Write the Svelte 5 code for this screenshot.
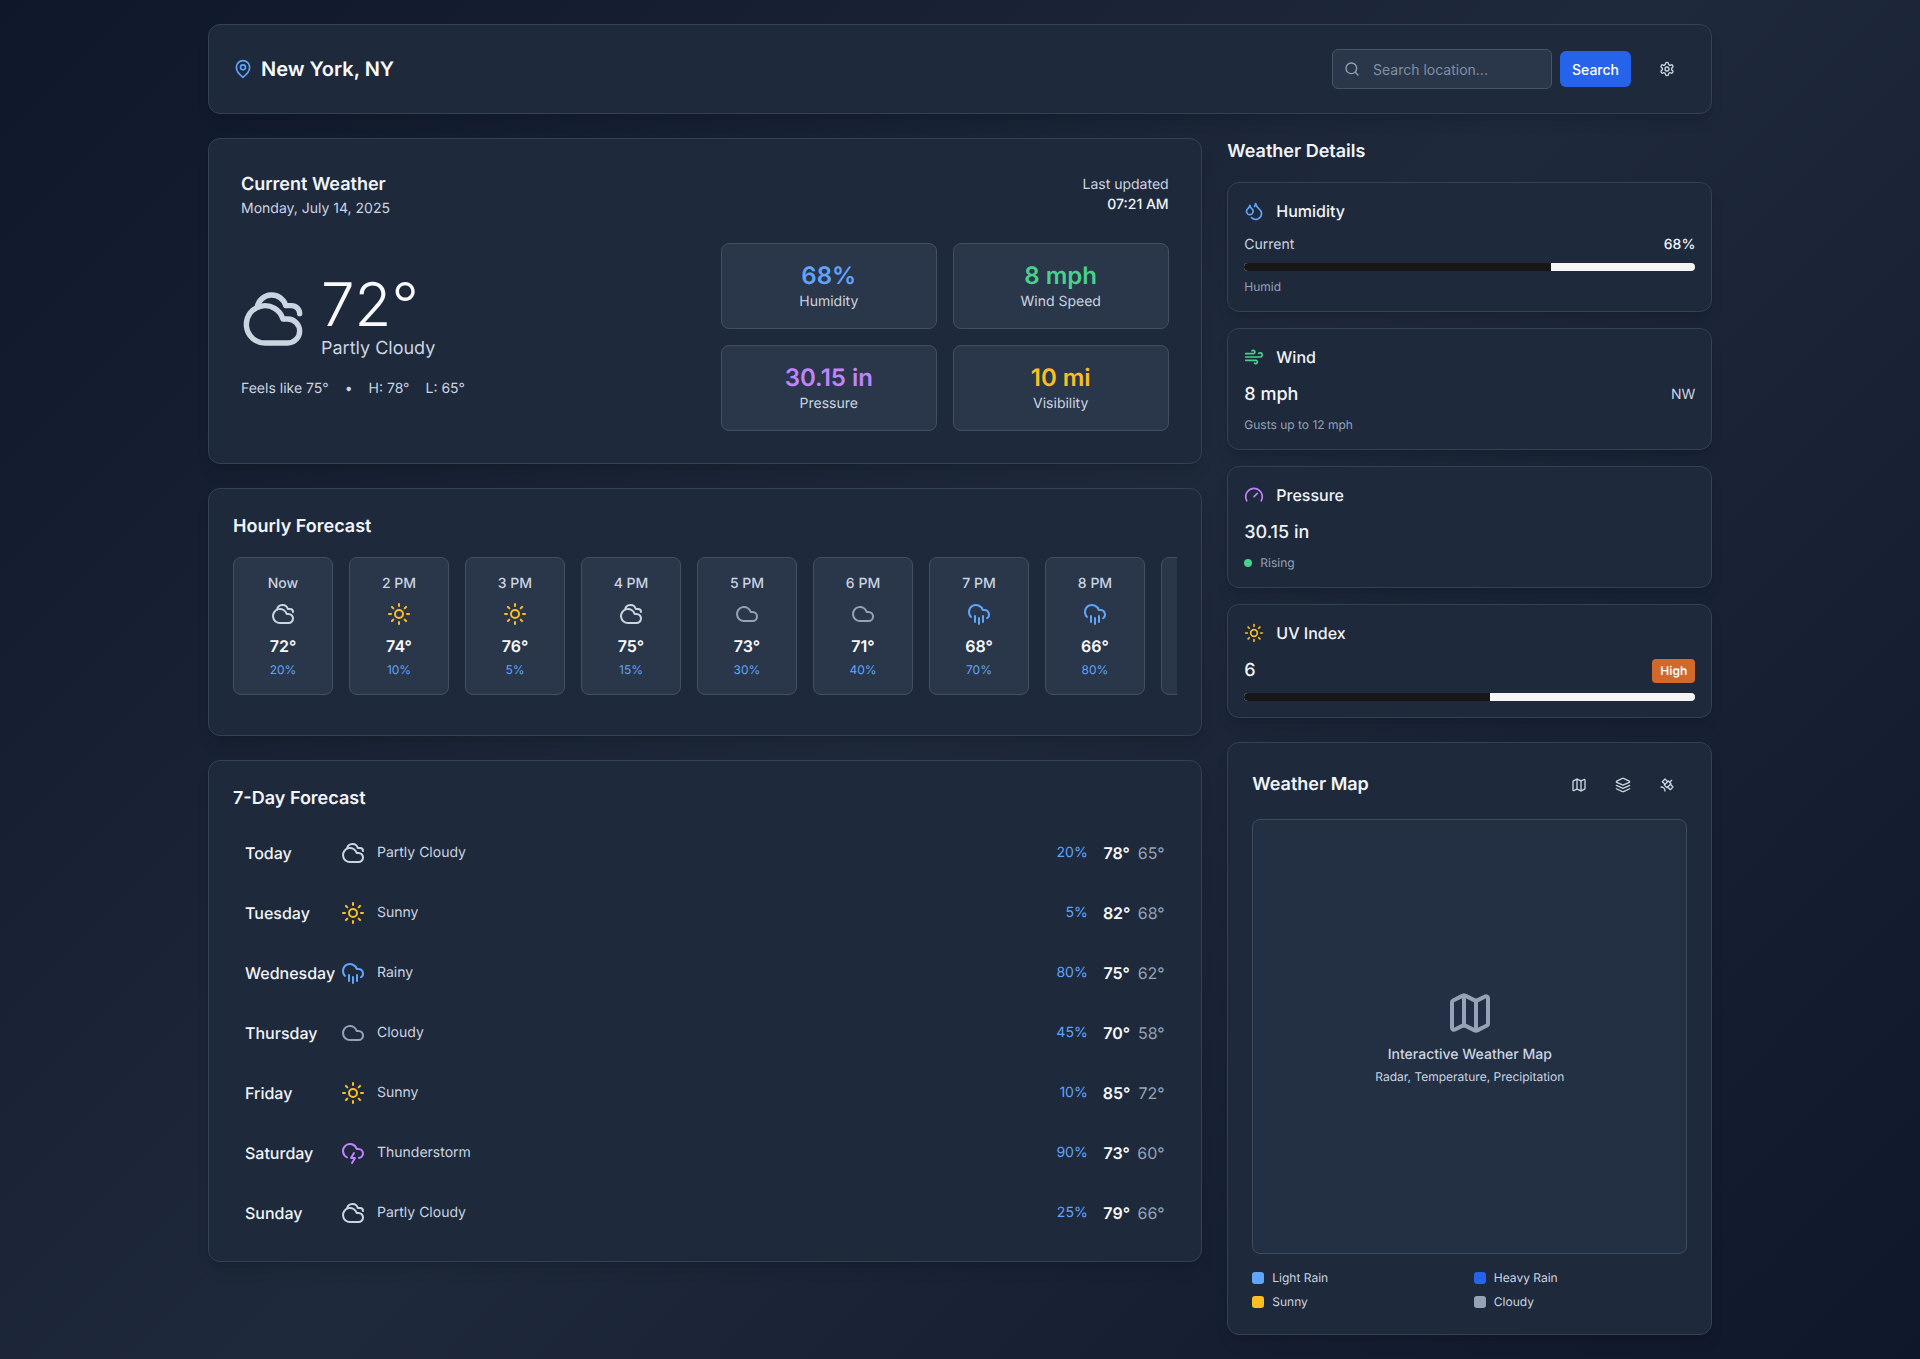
<script>
  const icons = {
    pin: '<path d="M20 10c0 6-8 12-8 12s-8-6-8-12a8 8 0 0 1 16 0Z"/><circle cx="12" cy="10" r="3"/>',
    search: '<circle cx="11" cy="11" r="8"/><path d="m21 21-4.3-4.3"/>',
    settings: '<path d="M12.22 2h-.44a2 2 0 0 0-2 2v.18a2 2 0 0 1-1 1.73l-.43.25a2 2 0 0 1-2 0l-.15-.08a2 2 0 0 0-2.73.73l-.22.38a2 2 0 0 0 .73 2.73l.15.1a2 2 0 0 1 1 1.72v.51a2 2 0 0 1-1 1.74l-.15.09a2 2 0 0 0-.73 2.73l.22.38a2 2 0 0 0 2.73.73l.15-.08a2 2 0 0 1 2 0l.43.25a2 2 0 0 1 1 1.73V20a2 2 0 0 0 2 2h.44a2 2 0 0 0 2-2v-.18a2 2 0 0 1 1-1.73l.43-.25a2 2 0 0 1 2 0l.15.08a2 2 0 0 0 2.73-.73l.22-.39a2 2 0 0 0-.73-2.73l-.15-.08a2 2 0 0 1-1-1.74v-.5a2 2 0 0 1 1-1.74l.15-.09a2 2 0 0 0 .73-2.73l-.22-.38a2 2 0 0 0-2.73-.73l-.15.08a2 2 0 0 1-2 0l-.43-.25a2 2 0 0 1-1-1.73V4a2 2 0 0 0-2-2z"/><circle cx="12" cy="12" r="3"/>',
    partly: '<path d="M17.5 21H9a7 7 0 1 1 6.71-9h1.79a4.5 4.5 0 1 1 0 9Z"/><path d="M22 10a3 3 0 0 0-3-3h-2.207a5.502 5.502 0 0 0-10.702.5"/>',
    sunny: '<circle cx="12" cy="12" r="4"/><path d="M12 2v2"/><path d="M12 20v2"/><path d="m4.93 4.93 1.41 1.41"/><path d="m17.66 17.66 1.41 1.41"/><path d="M2 12h2"/><path d="M20 12h2"/><path d="m6.34 17.66-1.41 1.41"/><path d="m19.07 4.93-1.41 1.41"/>',
    cloudy: '<path d="M17.5 19H9a7 7 0 1 1 6.71-9h1.79a4.5 4.5 0 1 1 0 9Z"/>',
    rainy: '<path d="M4 14.899A7 7 0 1 1 15.71 8h1.79a4.5 4.5 0 0 1 2.5 8.242"/><path d="M16 14v6"/><path d="M8 14v6"/><path d="M12 16v6"/>',
    storm: '<path d="M6 16.326A7 7 0 1 1 15.71 8h1.79a4.5 4.5 0 0 1 .5 8.973"/><path d="m13 12-3 5h4l-3 5"/>',
    droplets: '<path d="M7 16.3c2.2 0 4-1.83 4-4.05 0-1.16-.57-2.26-1.71-3.19S7.29 6.75 7 5.3c-.29 1.45-1.14 2.84-2.29 3.76S3 11.1 3 12.25c0 2.22 1.8 4.05 4 4.05z"/><path d="M12.56 6.6A10.97 10.97 0 0 0 14 3.02c.5 2.5 2 4.9 4 6.5s3 3.5 3 5.5a6.98 6.98 0 0 1-11.91 4.97"/>',
    wind: '<path d="M17.7 7.7a2.5 2.5 0 1 1 1.8 4.3H2"/><path d="M9.6 4.6A2 2 0 1 1 11 8H2"/><path d="M12.6 19.4A2 2 0 1 0 14 16H2"/>',
    gauge: '<path d="m12 14 4-4"/><path d="M3.34 19a10 10 0 1 1 17.32 0"/>',
    map: '<path d="M14.106 5.553a2 2 0 0 0 1.788 0l3.659-1.83A1 1 0 0 1 21 4.619v12.764a1 1 0 0 1-.553.894l-4.553 2.277a2 2 0 0 1-1.788 0l-4.212-2.106a2 2 0 0 0-1.788 0l-3.659 1.83A1 1 0 0 1 3 19.381V6.618a1 1 0 0 1 .553-.894l4.553-2.277a2 2 0 0 1 1.788 0z"/><path d="M15 5.764v15"/><path d="M9 3.236v15"/>',
    layers: '<path d="m12.83 2.18a2 2 0 0 0-1.66 0L2.6 6.08a1 1 0 0 0 0 1.83l8.58 3.91a2 2 0 0 0 1.66 0l8.58-3.9a1 1 0 0 0 0-1.83Z"/><path d="m22 17.65-9.17 4.16a2 2 0 0 1-1.66 0L2 17.65"/><path d="m22 12.65-9.17 4.16a2 2 0 0 1-1.66 0L2 12.65"/>',
    satellite: '<path d="M13 7 9 3 5 7l4 4"/><path d="m17 11 4 4-4 4-4-4"/><path d="m8 12 4 4 6-6-4-4Z"/><path d="m16 8 3-3"/><path d="M9 21a6 6 0 0 0-6-6"/>'
  };

  const stats = [
    { value: '68%', label: 'Humidity', color: 'blue' },
    { value: '8 mph', label: 'Wind Speed', color: 'green' },
    { value: '30.15 in', label: 'Pressure', color: 'purple' },
    { value: '10 mi', label: 'Visibility', color: 'yellow' }
  ];

  const hours = [
    { time: 'Now', icon: 'partly', temp: 72, rain: 20 },
    { time: '2 PM', icon: 'sunny', temp: 74, rain: 10 },
    { time: '3 PM', icon: 'sunny', temp: 76, rain: 5 },
    { time: '4 PM', icon: 'partly', temp: 75, rain: 15 },
    { time: '5 PM', icon: 'cloudy', temp: 73, rain: 30 },
    { time: '6 PM', icon: 'cloudy', temp: 71, rain: 40 },
    { time: '7 PM', icon: 'rainy', temp: 68, rain: 70 },
    { time: '8 PM', icon: 'rainy', temp: 66, rain: 80 }
  ];

  const days = [
    { day: 'Today', icon: 'partly', text: 'Partly Cloudy', rain: 20, high: 78, low: 65 },
    { day: 'Tuesday', icon: 'sunny', text: 'Sunny', rain: 5, high: 82, low: 68 },
    { day: 'Wednesday', icon: 'rainy', text: 'Rainy', rain: 80, high: 75, low: 62 },
    { day: 'Thursday', icon: 'cloudy', text: 'Cloudy', rain: 45, high: 70, low: 58 },
    { day: 'Friday', icon: 'sunny', text: 'Sunny', rain: 10, high: 85, low: 72 },
    { day: 'Saturday', icon: 'storm', text: 'Thunderstorm', rain: 90, high: 73, low: 60 },
    { day: 'Sunday', icon: 'partly', text: 'Partly Cloudy', rain: 25, high: 79, low: 66 }
  ];

  const legend = [
    { label: 'Light Rain', color: '#60a5fa' },
    { label: 'Heavy Rain', color: '#2563eb' },
    { label: 'Sunny', color: '#fbbf24' },
    { label: 'Cloudy', color: '#94a3b8' }
  ];
</script>

{#snippet icon(name, size, tone)}
  <svg class={tone} width={size} height={size} viewBox="0 0 24 24" fill="none" stroke="currentColor" stroke-width="2" stroke-linecap="round" stroke-linejoin="round">{@html icons[name]}</svg>
{/snippet}

<div class="page">
  <div class="container">
    <header class="card topbar">
      <div class="location">
        {@render icon('pin', 20, 'blue')}
        <h1>New York, NY</h1>
      </div>
      <div class="actions">
        <div class="search">
          {@render icon('search', 16, 'muted')}
          <input type="text" placeholder="Search location..." />
        </div>
        <button class="primary">Search</button>
        <button class="ghost settings">{@render icon('settings', 16, 'soft')}</button>
      </div>
    </header>

    <div class="columns">
      <main class="left">
        <section class="card current">
          <div class="current-head">
            <div>
              <h2>Current Weather</h2>
              <p class="sub">Monday, July 14, 2025</p>
            </div>
            <div class="updated">
              <p class="sub">Last updated</p>
              <p class="time">07:21 AM</p>
            </div>
          </div>
          <div class="current-body">
            <div>
              <div class="now">
                {@render icon('partly', 64, 'soft')}
                <div>
                  <div class="big-temp">72°</div>
                  <div class="condition">Partly Cloudy</div>
                </div>
              </div>
              <div class="feels">
                <span>Feels like 75°</span>
                <span>•</span>
                <span>H: 78°</span>
                <span>L: 65°</span>
              </div>
            </div>
            <div class="stats">
              {#each stats as s}
                <div class="tile stat">
                  <div class="stat-value {s.color}">{s.value}</div>
                  <div class="stat-label">{s.label}</div>
                </div>
              {/each}
            </div>
          </div>
        </section>

        <section class="card forecast">
          <h2>Hourly Forecast</h2>
          <div class="hours">
            {#each hours as h}
              <div class="tile hour">
                <div class="hour-time">{h.time}</div>
                <div class="hour-icon">{@render icon(h.icon, 24, h.icon)}</div>
                <div class="hour-temp">{h.temp}°</div>
                <div class="hour-rain">{h.rain}%</div>
              </div>
            {/each}
            <div class="tile hour"></div>
          </div>
        </section>

        <section class="card forecast">
          <h2>7-Day Forecast</h2>
          <div class="days">
            {#each days as d}
              <div class="day">
                <div class="day-left">
                  <div class="day-name">{d.day}</div>
                  {@render icon(d.icon, 24, d.icon)}
                  <div class="day-text">{d.text}</div>
                </div>
                <div class="day-right">
                  <div class="day-rain">{d.rain}%</div>
                  <div class="day-high">{d.high}°</div>
                  <div class="day-low">{d.low}°</div>
                </div>
              </div>
            {/each}
          </div>
        </section>
      </main>

      <aside class="right">
        <h2 class="details-title">Weather Details</h2>
        <div class="details">
          <div class="card detail">
            <div class="detail-head">{@render icon('droplets', 20, 'blue')}<h3>Humidity</h3></div>
            <div class="line small">
              <span class="soft">Current</span>
              <span class="strong">68%</span>
            </div>
            <div class="bar"><div class="fill" style="width: 68%"></div></div>
            <p class="note">Humid</p>
          </div>

          <div class="card detail">
            <div class="detail-head">{@render icon('wind', 20, 'green')}<h3>Wind</h3></div>
            <div class="line">
              <span class="reading">8 mph</span>
              <span class="soft dir">NW</span>
            </div>
            <p class="note">Gusts up to 12 mph</p>
          </div>

          <div class="card detail">
            <div class="detail-head">{@render icon('gauge', 20, 'purple')}<h3>Pressure</h3></div>
            <div class="line">
              <span class="reading">30.15 in</span>
            </div>
            <p class="note rising"><span class="dot"></span>Rising</p>
          </div>

          <div class="card detail">
            <div class="detail-head">{@render icon('sunny', 20, 'yellow')}<h3>UV Index</h3></div>
            <div class="line uv">
              <span class="reading">6</span>
              <span class="badge">High</span>
            </div>
            <div class="bar"><div class="fill" style="width: 54.5%"></div></div>
          </div>
        </div>

        <section class="card weather-map">
          <div class="map-head">
            <h2>Weather Map</h2>
            <div class="map-tools">
              <button class="ghost">{@render icon('map', 16, 'soft')}</button>
              <button class="ghost">{@render icon('layers', 16, 'soft')}</button>
              <button class="ghost">{@render icon('satellite', 16, 'soft')}</button>
            </div>
          </div>
          <div class="map-box">
            {@render icon('map', 48, 'muted')}
            <p class="map-title">Interactive Weather Map</p>
            <p class="map-sub">Radar, Temperature, Precipitation</p>
          </div>
          <div class="legend">
            {#each legend as l}
              <div class="legend-item">
                <span class="swatch" style="background: {l.color}"></span>
                {l.label}
              </div>
            {/each}
          </div>
        </section>
      </aside>
    </div>
  </div>
</div>

<style>
  :global(body) {
    margin: 0;
    font-family: Inter, "Liberation Sans", sans-serif;
    color: #f1f5f9;
    text-rendering: geometricPrecision;
  }
  h1, h2, h3, p {
    margin: 0;
  }
  svg {
    display: block;
    flex-shrink: 0;
  }
  .page {
    min-height: 1359px;
    box-sizing: border-box;
    padding: 24px 208px;
    background: linear-gradient(135deg, #0f172a 0%, #1e293b 50%, #0f172a 100%);
  }
  .container {
    width: 1504px;
  }
  .card {
    box-sizing: border-box;
    background: #1e293b;
    border: 1px solid #334155;
    border-radius: 12px;
    box-shadow: 0 10px 15px -3px rgba(0, 0, 0, 0.1), 0 4px 6px -4px rgba(0, 0, 0, 0.1);
  }
  .tile {
    box-sizing: border-box;
    background: #2a3649;
    border: 1px solid #435064;
    border-radius: 8px;
  }

  /* icon tones */
  .blue, .rainy { color: #60a5fa; }
  .green { color: #4ad08c; }
  .purple, .storm { color: #c084fc; }
  .yellow, .sunny { color: #fbbf24; }
  .soft, .partly { color: #cbd5e1; }
  .muted, .cloudy { color: #94a3b8; }

  .topbar {
    height: 90px;
    padding: 0 24px;
    display: flex;
    align-items: center;
    justify-content: space-between;
  }
  .location {
    display: flex;
    align-items: center;
    gap: 8px;
  }
  h1 {
    font-size: 20px;
    line-height: 28px;
    font-weight: 600;
    color: #f8fafc;
  }
  .actions {
    display: flex;
    align-items: center;
    gap: 8px;
  }
  .search {
    position: relative;
  }
  .search svg {
    position: absolute;
    left: 12px;
    top: 12px;
  }
  input {
    display: block;
    box-sizing: border-box;
    width: 220px;
    height: 40px;
    padding: 0 12px 0 40px;
    background: #2a3649;
    border: 1px solid #475569;
    border-radius: 6px;
    font: 14px Inter, sans-serif;
    color: #f1f5f9;
    outline: none;
  }
  input::placeholder {
    color: #8190a5;
    opacity: 1;
  }
  button {
    border: none;
    border-radius: 6px;
    background: transparent;
    font-family: inherit;
    padding: 0;
  }
  .primary {
    width: 71px;
    height: 36px;
    background: #2563eb;
    color: #fff;
    font-size: 14px;
    font-weight: 500;
  }
  .ghost {
    width: 40px;
    height: 36px;
    display: flex;
    align-items: center;
    justify-content: center;
  }
  .settings {
    margin-left: 8px;
  }

  .columns {
    margin-top: 24px;
    display: grid;
    grid-template-columns: 993.67px 485px;
    gap: 25.66px;
    align-items: start;
  }
  .left {
    display: flex;
    flex-direction: column;
    gap: 24px;
  }
  h2 {
    font-size: 18px;
    line-height: 28px;
    font-weight: 600;
    color: #f1f5f9;
  }
  .sub {
    font-size: 14px;
    line-height: 20px;
    color: #cbd5e1;
  }

  .current {
    padding: 32px;
  }
  .current-head {
    display: flex;
    justify-content: space-between;
    align-items: center;
    margin-bottom: 24px;
  }
  .updated {
    text-align: right;
  }
  .time {
    font-size: 14px;
    line-height: 20px;
    font-weight: 450;
    color: #f1f5f9;
  }
  .current-body {
    display: grid;
    grid-template-columns: 1fr 1fr;
    gap: 32px;
    align-items: center;
  }
  .now {
    display: flex;
    align-items: center;
    gap: 16px;
    margin-bottom: 16px;
  }
  .big-temp {
    font-size: 60px;
    line-height: 60px;
    font-weight: 300;
    color: #f8fafc;
  }
  .condition {
    font-size: 18px;
    line-height: 28px;
    color: #cbd5e1;
  }
  .feels {
    display: flex;
    gap: 16px;
    font-size: 14px;
    line-height: 20px;
    color: #cbd5e1;
  }
  .stats {
    display: grid;
    grid-template-columns: 1fr 1fr;
    gap: 16px;
  }
  .stat {
    padding: 16px;
    text-align: center;
  }
  .stat-value {
    font-size: 24px;
    line-height: 32px;
    font-weight: 600;
  }
  .stat-label {
    font-size: 14px;
    line-height: 20px;
    color: #cbd5e1;
  }

  .forecast {
    padding: 24px;
  }
  .hours {
    margin-top: 16px;
    display: flex;
    gap: 16px;
    padding-bottom: 16px;
    overflow: hidden;
  }
  .hour {
    flex: 0 0 100px;
    padding: 16px;
    text-align: center;
  }
  .hour-time {
    font-size: 14px;
    line-height: 20px;
    font-weight: 500;
    color: #cbd5e1;
  }
  .hour-icon {
    display: flex;
    justify-content: center;
    margin: 8px 0;
  }
  .hour-temp {
    font-size: 16px;
    line-height: 24px;
    font-weight: 600;
    color: #f8fafc;
  }
  .hour-rain {
    margin-top: 4px;
    font-size: 12px;
    line-height: 16px;
    color: #60a5fa;
  }

  .days {
    margin-top: 16px;
    display: flex;
    flex-direction: column;
    gap: 12px;
  }
  .day {
    height: 48px;
    padding: 0 12px;
    display: flex;
    align-items: center;
    justify-content: space-between;
  }
  .day-left, .day-right {
    display: flex;
    align-items: center;
  }
  .day-name {
    width: 80px;
    margin-right: 16px;
    white-space: nowrap;
    font-size: 16px;
    line-height: 24px;
    font-weight: 500;
    color: #f1f5f9;
  }
  .day-text {
    margin-left: 12px;
    font-size: 14px;
    line-height: 20px;
    color: #cbd5e1;
  }
  .day-rain {
    margin-right: 13px;
    font-size: 14px;
    line-height: 20px;
    color: #60a5fa;
  }
  .day-high {
    width: 32px;
    text-align: center;
    font-size: 16px;
    line-height: 24px;
    font-weight: 600;
    color: #f8fafc;
  }
  .day-low {
    width: 32px;
    text-align: right;
    font-size: 16px;
    line-height: 24px;
    color: #94a3b8;
  }

  .details-title {
    margin-bottom: 16px;
  }
  .details {
    display: flex;
    flex-direction: column;
    gap: 16px;
  }
  .detail {
    padding: 16px;
  }
  .detail-head {
    display: flex;
    align-items: center;
    gap: 12px;
    margin-bottom: 12px;
  }
  h3 {
    font-size: 16px;
    line-height: 24px;
    font-weight: 500;
    color: #f1f5f9;
  }
  .line {
    display: flex;
    align-items: center;
    justify-content: space-between;
    margin-bottom: 8px;
    min-height: 20px;
  }
  .small {
    font-size: 14px;
    line-height: 20px;
  }
  .strong {
    font-weight: 500;
    color: #f1f5f9;
  }
  .reading {
    font-size: 18px;
    line-height: 28px;
    font-weight: 500;
    color: #f1f5f9;
  }
  .dir {
    font-size: 14px;
    line-height: 20px;
  }
  .bar {
    height: 8px;
    border-radius: 999px;
    background: #f5f5f5;
    overflow: hidden;
  }
  .fill {
    height: 100%;
    background: #171717;
  }
  .note {
    font-size: 12px;
    line-height: 16px;
    color: #94a3b8;
  }
  .bar + .note {
    margin-top: 8px;
  }
  .rising {
    display: flex;
    align-items: center;
    gap: 8px;
  }
  .dot {
    width: 8px;
    height: 8px;
    border-radius: 50%;
    background: #4ad08c;
  }
  .badge {
    padding: 4px 8px;
    border-radius: 4px;
    background: #d0692a;
    color: #f8fafc;
    font-size: 12px;
    line-height: 16px;
    font-weight: 600;
  }

  .weather-map {
    margin-top: 24px;
    padding: 24px;
  }
  .map-head {
    display: flex;
    align-items: center;
    justify-content: space-between;
    margin-bottom: 16px;
  }
  .map-tools {
    display: flex;
    gap: 4px;
  }
  .map-box {
    box-sizing: border-box;
    aspect-ratio: 1;
    background: #232f43;
    border: 1px solid #3f4c60;
    border-radius: 8px;
    display: flex;
    flex-direction: column;
    align-items: center;
    justify-content: center;
  }
  .map-title {
    margin-top: 8px;
    font-size: 14px;
    line-height: 20px;
    font-weight: 500;
    color: #cbd5e1;
  }
  .map-sub {
    margin-top: 4px;
    font-size: 12px;
    line-height: 16px;
    color: #cbd5e1;
  }
  .legend {
    margin-top: 16px;
    display: grid;
    grid-template-columns: 1fr 1fr;
    gap: 8px;
  }
  .legend-item {
    display: flex;
    align-items: center;
    gap: 8px;
    font-size: 12px;
    line-height: 16px;
    color: #cbd5e1;
  }
  .swatch {
    width: 12px;
    height: 12px;
    border-radius: 3px;
  }
</style>
